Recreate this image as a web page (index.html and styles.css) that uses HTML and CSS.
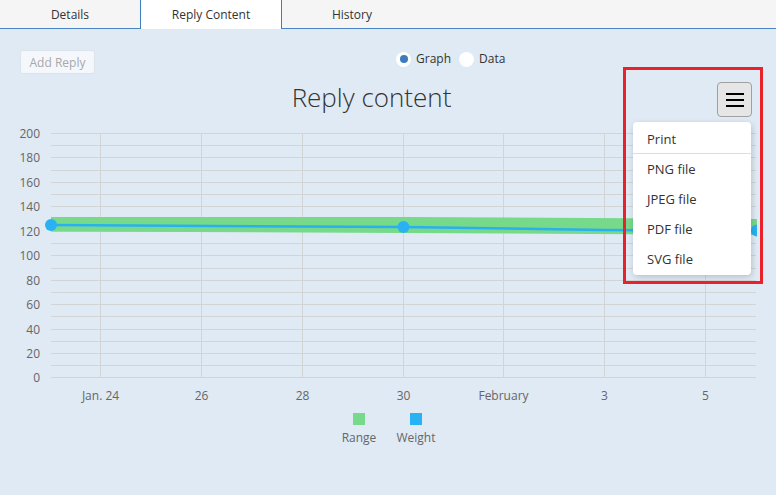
FILE: index.html
```html
<!DOCTYPE html>
<html>
<head>
<meta charset="utf-8">
<link rel="stylesheet" href="styles.css">
</head>
<body>
<nav class="tabs">
  <div class="tab">Details</div>
  <div class="tab active">Reply Content</div>
  <div class="tab">History</div>
  <div class="tab-fill"></div>
</nav>

<main class="panel">
  <div class="toolbar">
    <button class="btn-add" disabled>Add Reply</button>
    <div class="view-switch">
      <label class="radio"><span class="dot checked"></span>Graph</label>
      <label class="radio"><span class="dot"></span>Data</label>
    </div>
  </div>

  <div class="chart">
    <svg class="chart-svg" width="776" height="380" viewBox="0 80 776 380" xmlns="http://www.w3.org/2000/svg">
      <defs>
        <clipPath id="plot"><rect x="40" y="125" width="717" height="260"/></clipPath>
      </defs>
      <text class="chart-title" x="371.5" y="107" text-anchor="middle">Reply content</text>

      <!-- horizontal grid, every 10 units -->
      <g class="grid">
        <line x1="51" x2="756" y1="133.5" y2="133.5"/>
        <line x1="51" x2="756" y1="145.5" y2="145.5"/>
        <line x1="51" x2="756" y1="157.5" y2="157.5"/>
        <line x1="51" x2="756" y1="170.5" y2="170.5"/>
        <line x1="51" x2="756" y1="182.5" y2="182.5"/>
        <line x1="51" x2="756" y1="194.5" y2="194.5"/>
        <line x1="51" x2="756" y1="206.5" y2="206.5"/>
        <line x1="51" x2="756" y1="219.5" y2="219.5"/>
        <line x1="51" x2="756" y1="231.5" y2="231.5"/>
        <line x1="51" x2="756" y1="243.5" y2="243.5"/>
        <line x1="51" x2="756" y1="255.5" y2="255.5"/>
        <line x1="51" x2="756" y1="268.5" y2="268.5"/>
        <line x1="51" x2="756" y1="280.5" y2="280.5"/>
        <line x1="51" x2="756" y1="292.5" y2="292.5"/>
        <line x1="51" x2="756" y1="304.5" y2="304.5"/>
        <line x1="51" x2="756" y1="316.5" y2="316.5"/>
        <line x1="51" x2="756" y1="329.5" y2="329.5"/>
        <line x1="51" x2="756" y1="341.5" y2="341.5"/>
        <line x1="51" x2="756" y1="353.5" y2="353.5"/>
        <line x1="51" x2="756" y1="365.5" y2="365.5"/>
        <line x1="51" x2="756" y1="377.5" y2="377.5"/>
        <!-- vertical grid, every 2 days -->
        <line x1="100.5" x2="100.5" y1="133" y2="378"/>
        <line x1="201.5" x2="201.5" y1="133" y2="378"/>
        <line x1="302.5" x2="302.5" y1="133" y2="378"/>
        <line x1="403.5" x2="403.5" y1="133" y2="378"/>
        <line x1="503.5" x2="503.5" y1="133" y2="378"/>
        <line x1="604.5" x2="604.5" y1="133" y2="378"/>
        <line x1="705.5" x2="705.5" y1="133" y2="378"/>
      </g>

      <g class="y-labels" text-anchor="end">
        <text x="40" y="138">200</text>
        <text x="40" y="162">180</text>
        <text x="40" y="187">160</text>
        <text x="40" y="211">140</text>
        <text x="40" y="236">120</text>
        <text x="40" y="260">100</text>
        <text x="40" y="285">80</text>
        <text x="40" y="309">60</text>
        <text x="40" y="334">40</text>
        <text x="40" y="358">20</text>
        <text x="40" y="382">0</text>
      </g>

      <g class="x-labels" text-anchor="middle">
        <text x="100.5" y="400">Jan. 24</text>
        <text x="201.5" y="400">26</text>
        <text x="302.5" y="400">28</text>
        <text x="403.5" y="400">30</text>
        <text x="503.5" y="400">February</text>
        <text x="604.5" y="400">3</text>
        <text x="705.5" y="400">5</text>
      </g>

      <g clip-path="url(#plot)">
        <polygon class="range" points="51,217 403,217 757,219 757,235 403,233 51,231.5"/>
        <polyline class="weight" points="51,225 403,227 604,230 757,231"/>
        <circle class="pt" cx="51" cy="225" r="6"/>
        <circle class="pt" cx="403.5" cy="227" r="6"/>
        <circle class="pt" cx="757" cy="230.5" r="6"/>
      </g>

      <g class="legend">
        <rect x="353" y="413" width="12" height="12" class="lg-range"/>
        <text x="359" y="442" text-anchor="middle">Range</text>
        <rect x="410" y="413" width="12" height="12" class="lg-weight"/>
        <text x="416" y="442" text-anchor="middle">Weight</text>
      </g>
    </svg>

    <button class="menu-btn" aria-label="Chart menu">
      <span></span><span></span><span></span>
    </button>
    <ul class="export-menu">
      <li class="sep">Print</li>
      <li>PNG file</li>
      <li>JPEG file</li>
      <li>PDF file</li>
      <li>SVG file</li>
    </ul>
    <div class="highlight"></div>
  </div>
</main>
</body>
</html>
```

FILE: styles.css
```css
* { box-sizing: border-box; }

html, body {
  margin: 0;
  padding: 0;
}

body {
  width: 776px;
  height: 495px;
  overflow: hidden;
  background: #dfeaf5;
  font-family: "Open Sans", "Noto Sans", sans-serif;
  color: #333;
}

/* tab strip */
.tabs {
  display: flex;
  height: 29px;
  background: #f5f5f5;
}

.tab {
  width: 140px;
  height: 29px;
  display: flex;
  align-items: center;
  justify-content: center;
  font-size: 12px;
  color: #333;
  border-bottom: 1px solid #4a86c5;
}

.tab.active {
  background: #fff;
  border-left: 1px solid #3d7fc1;
  border-right: 1px solid #3d7fc1;
  border-bottom: none;
  width: 142px;
}

.tab-fill {
  flex: 1;
  border-bottom: 1px solid #4a86c5;
}

/* toolbar */
.panel {
  position: relative;
}

.toolbar {
  display: flex;
  align-items: flex-start;
  height: 51px;
  padding: 21px 0 0 20px;
}

.btn-add {
  width: 75px;
  height: 24px;
  padding: 0;
  background: #f4f8fc;
  border: 1px solid #dde3ea;
  border-radius: 3px;
  font-family: inherit;
  font-size: 12px;
  color: #a8a8a8;
}

.view-switch {
  display: flex;
  gap: 8px;
  margin: 0 0 0 301px;
  position: relative;
  top: 1px;
}

.radio {
  display: flex;
  align-items: center;
  gap: 5px;
  font-size: 12px;
  color: #333;
  line-height: 16px;
}

.dot {
  width: 15px;
  height: 15px;
  border-radius: 50%;
  background: #fff;
  display: inline-block;
  position: relative;
}

.dot.checked::after {
  content: "";
  position: absolute;
  left: 3.5px;
  top: 3.5px;
  width: 8px;
  height: 8px;
  border-radius: 50%;
  background: #3b7cbd;
}

/* chart */
.chart {
  position: relative;
  height: 380px;
}

.chart-svg {
  display: block;
}

.chart-title {
  font-family: "Open Sans", sans-serif;
  font-weight: 300;
  font-size: 26px;
  fill: #333;
}

.grid line {
  stroke: #d2d4d6;
  stroke-width: 1;
}

.y-labels text,
.x-labels text,
.legend text {
  font-family: "Open Sans", sans-serif;
  font-size: 12px;
  fill: #666;
}

.range { fill: #77d98a; }

.weight {
  fill: none;
  stroke: #2ab0ef;
  stroke-width: 2.5;
}

.pt { fill: #29b1f3; }

.lg-range { fill: #77d98a; }
.lg-weight { fill: #29b1f3; }

/* export menu */
.menu-btn {
  position: absolute;
  left: 717px;
  top: 2px;
  width: 35px;
  height: 35px;
  padding: 0;
  background: #e6e6e6;
  border: 1px solid #a0a0a0;
  border-radius: 4px;
  display: flex;
  flex-direction: column;
  align-items: center;
  justify-content: center;
  gap: 4px;
}

.menu-btn span {
  display: block;
  width: 18px;
  height: 2px;
  background: #000;
}

.export-menu {
  position: absolute;
  left: 633px;
  top: 42px;
  width: 118px;
  margin: 0;
  padding: 3px 0 1px;
  list-style: none;
  background: #fff;
  border-radius: 4px;
  box-shadow: 1px 2px 6px rgba(0, 0, 0, 0.18);
}

.export-menu li {
  height: 30px;
  line-height: 30px;
  padding-left: 14px;
  font-size: 13px;
  color: #333;
}

.export-menu li.sep {
  height: 29px;
  line-height: 28px;
  border-bottom: 1px solid #ddd;
}

.highlight {
  position: absolute;
  left: 623px;
  top: -13px;
  width: 140px;
  height: 217px;
  border: 3px solid #e8212b;
  pointer-events: none;
}
```
